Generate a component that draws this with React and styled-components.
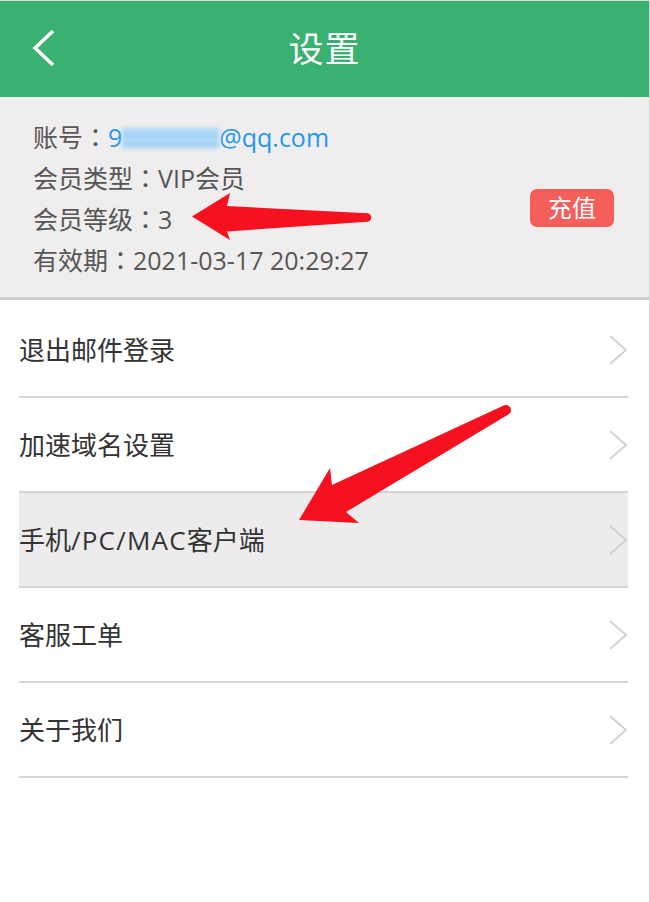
import React from "react";
import styled, { createGlobalStyle } from "styled-components";

const GlobalStyle = createGlobalStyle`
  html, body {
    margin: 0;
    padding: 0;
    background: #ffffff;
  }
  body {
    font-family: "Open Sans", "Noto Sans CJK SC", sans-serif;
  }
`;

const Page = styled.div`
  position: relative;
  width: 650px;
  min-height: 902px;
  box-sizing: border-box;
  border-right: 1px solid #d6d6d6;
  background: #fff;
`;

const Header = styled.div`
  height: 97px;
  box-sizing: border-box;
  border-top: 1px solid #dcdcdc;
  background: #3ab170;
  display: grid;
  grid-template-columns: 1fr auto 1fr;
  align-items: center;
`;

const Back = styled.div`
  padding-left: 31px;
  display: flex;
  align-items: center;
`;

const Title = styled.div`
  color: #fff;
  font-size: 35px;
  line-height: 40px;
  letter-spacing: 1px;
`;

const Info = styled.div`
  height: 203px;
  box-sizing: border-box;
  padding: 22px 35px 21px 33px;
  background: #efeded;
  border-bottom: 3px solid #cdcdcd;
  display: flex;
  justify-content: space-between;
  align-items: center;
`;

const Lines = styled.div`
  display: flex;
  flex-direction: column;
`;

const Line = styled.div`
  font-size: 25px;
  line-height: 40px;
  color: #565656;
  white-space: nowrap;
`;

/* full-width colon drawn centred, as in the screenshot */
const Colon = styled.span`
  font-family: "Noto Sans CJK TC", "Noto Sans CJK SC", sans-serif;
`;

const Email = styled.span`
  color: #2597f0;
`;

const Masked = styled.span`
  display: inline-block;
  width: 97px;
  height: 21px;
  vertical-align: -2px;
  background: repeating-linear-gradient(
    180deg,
    #8cc8f7 0px,
    #b9defb 4px,
    #8cc8f7 8px
  );
  filter: blur(2px);
  opacity: 0.9;
`;

const Recharge = styled.button`
  margin-top: 20px;
  width: 84px;
  height: 38px;
  border: none;
  border-radius: 7px;
  background: #f45e5b;
  color: #fff;
  font-family: "Open Sans", "Noto Sans CJK SC", sans-serif;
  font-size: 24px;
  line-height: 38px;
  padding: 0;
`;

const List = styled.div`
  padding: 3px 21px 0 19px;
`;

const Item = styled.div`
  height: 95px;
  box-sizing: border-box;
  border-bottom: 2px solid #d5d5d5;
  background: ${(p) => (p.$active ? "#edebeb" : "transparent")};
  display: flex;
  align-items: center;
  justify-content: space-between;
`;

const Label = styled.span`
  font-size: 26px;
  line-height: 30px;
  color: #333;
`;

const Latin = styled.span`
  letter-spacing: 1.2px;
`;

const Overlay = styled.svg`
  position: absolute;
  left: 0;
  top: 0;
  pointer-events: none;
`;

function Chevron() {
  return (
    <svg width="20" height="32" viewBox="0 0 20 32">
      <polyline
        points="2,2 18,16 2,30"
        fill="none"
        stroke="#cdd4d9"
        strokeWidth="2"
      />
    </svg>
  );
}

const items = [
  ["退出邮件登录"],
  ["加速域名设置"],
  ["手机", "/PC/MAC", "客户端"],
  ["客服工单"],
  ["关于我们"],
];

export default function App() {
  return (
    <Page>
      <GlobalStyle />
      <Header>
        <Back>
          <svg width="26" height="40" viewBox="0 0 26 40">
            <polyline
              points="22,2 4,19 22,36"
              fill="none"
              stroke="#fff"
              strokeWidth="3.5"
            />
          </svg>
        </Back>
        <Title>设置</Title>
        <div />
      </Header>

      <Info>
        <Lines>
          <Line>
            账号<Colon>：</Colon>
            <Email>
              9<Masked />@qq.com
            </Email>
          </Line>
          <Line>
            会员类型<Colon>：</Colon>VIP会员
          </Line>
          <Line>
            会员等级<Colon>：</Colon>3
          </Line>
          <Line>
            有效期<Colon>：</Colon>2021-03-17 20:29:27
          </Line>
        </Lines>
        <Recharge>充值</Recharge>
      </Info>

      <List>
        {items.map((parts, i) => (
          <Item key={i} $active={i === 2}>
            <Label>
              {parts.length === 3 ? (
                <>
                  {parts[0]}
                  <Latin>{parts[1]}</Latin>
                  {parts[2]}
                </>
              ) : (
                parts[0]
              )}
            </Label>
            <Chevron />
          </Item>
        ))}
      </List>

      {/* annotation arrows */}
      <Overlay width="650" height="902" viewBox="0 0 650 902">
        <polygon
          points="192,216.5 230,193 227,206 367,213.3 367,221.7 227,231.5 230,240"
          fill="#f5111f"
        />
        <circle cx="367" cy="217.5" r="4.2" fill="#f5111f" />
        <polygon
          points="299,520 330,468 332,485 503.7,405.6 508.3,414.4 346,512 359,523"
          fill="#f5111f"
        />
        <circle cx="506" cy="410" r="5" fill="#f5111f" />
      </Overlay>
    </Page>
  );
}
